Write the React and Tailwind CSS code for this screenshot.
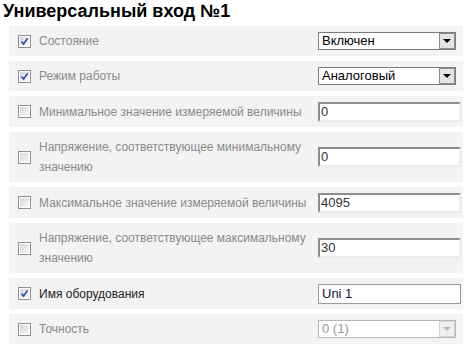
import React from "react";

function Check({ checked }) {
  return (
    <div className="w-[13px] h-[13px] shrink-0 border border-[#8f8f8f] bg-white p-[1px]">
      <div className="w-full h-full bg-gradient-to-br from-[#d6d6d6] to-[#f8f8f8] relative">
        {checked && (
          <svg viewBox="0 0 9 9" className="absolute inset-0 w-full h-full">
            <path d="M1.5 4.6 L3.6 7 L7.6 1.4" fill="none" stroke="#2a46b8" strokeWidth="1.6" />
          </svg>
        )}
      </div>
    </div>
  );
}

function Select({ value, disabled }) {
  return (
    <div
      className={`w-[138px] h-[18px] flex items-center bg-white border ${
        disabled ? "border-[#b8b8b8]" : "border-[#7c7c7c]"
      }`}
    >
      <div
        className={`flex-1 pl-[3px] text-[13px] leading-[16px] ${
          disabled ? "text-[#9a9a9a]" : "text-black"
        }`}
      >
        {value}
      </div>
      <div
        className={`w-[16px] h-[16px] mr-[0px] flex items-center justify-center border ${
          disabled ? "border-[#d4d4d4] bg-[#f0f0f0]" : "border-[#8c8c8c] bg-[#e4e4e4]"
        }`}
      >
        <svg viewBox="0 0 8 4" className="w-[8px] h-[4px]">
          <path d="M0 0 H8 L4 4 Z" fill={disabled ? "#b8b8b8" : "#000"} />
        </svg>
      </div>
    </div>
  );
}

function Input({ value, plain }) {
  if (plain) {
    return (
      <div className="w-[143px] h-[20px] bg-white border border-[#9a9a9a] pl-[3px] text-[13px] leading-[18px] text-[#111133]">
        {value}
      </div>
    );
  }
  return (
    <div className="w-[143px] h-[20px] bg-white border-t-2 border-l-2 border-r-2 border-b-2 border-t-[#8e8e8e] border-l-[#8e8e8e] border-r-[#ececec] border-b-[#ececec] pl-[1px] text-[13px] leading-[16px] text-[#333]">
      {value}
    </div>
  );
}

function Row({ checked, label, dark, h, children }) {
  return (
    <div className={`flex items-center bg-[#f3f3f3] pl-[9px] pr-[2px] ${h}`}>
      <Check checked={checked} />
      <div
        className={`flex-1 ml-[8px] pr-[8px] text-[12px] leading-[20px] ${
          dark ? "text-[#222]" : "text-[#8a8a8a]"
        }`}
      >
        {label}
      </div>
      <div className="w-[143px] shrink-0">{children}</div>
    </div>
  );
}

export default function App() {
  return (
    <div
      className="w-[468px] h-[348px] bg-white overflow-hidden"
      style={{ fontFamily: '"Liberation Sans", Arial, sans-serif' }}
    >
      <div className="pl-[3px] h-[26px] text-[18px] leading-[22px] font-bold text-black">
        Универсальный вход №1
      </div>
      <div className="ml-[9px] w-[454px] flex flex-col gap-[5px]">
        <Row checked label="Состояние" h="h-[30px]">
          <Select value="Включен" />
        </Row>
        <Row checked label="Режим работы" h="h-[30px]">
          <Select value="Аналоговый" />
        </Row>
        <Row label="Минимальное значение измеряемой величины" h="h-[31px]">
          <Input value="0" />
        </Row>
        <Row label="Напряжение, соответствующее минимальному значению" h="h-[50px]">
          <Input value="0" />
        </Row>
        <Row label="Максимальное значение измеряемой величины" h="h-[31px]">
          <Input value="4095" />
        </Row>
        <Row label="Напряжение, соответствующее максимальному значению" h="h-[50px]">
          <Input value="30" />
        </Row>
        <Row checked dark label="Имя оборудования" h="h-[31px]">
          <Input value="Uni 1" plain />
        </Row>
        <Row label="Точность" h="h-[30px]">
          <Select value="0 (1)" disabled />
        </Row>
      </div>
    </div>
  );
}
